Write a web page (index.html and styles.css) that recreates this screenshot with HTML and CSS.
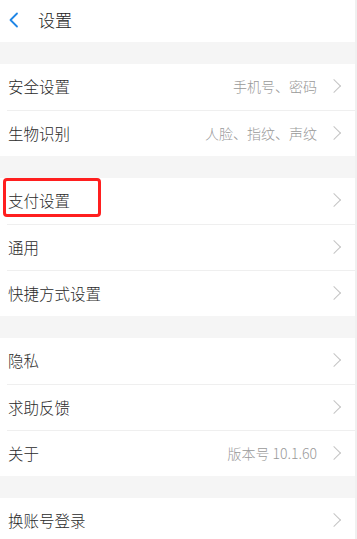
FILE: index.html
```html
<!DOCTYPE html>
<html lang="zh-CN">
<head>
  <meta charset="UTF-8">
  <title>设置</title>
  <meta name="viewport" content="width=device-width, initial-scale=1">
  <link rel="stylesheet" href="styles.css">
</head>
<body>
  <div class="page">
    <header class="topbar">
      <svg class="back" width="12" height="16" viewBox="0 0 12 16">
        <polyline points="9,1.5 2.5,8 9,14.5" fill="none" stroke="#1f86e6" stroke-width="1.8" stroke-linecap="round" stroke-linejoin="round"/>
      </svg>
      <span class="title">设置</span>
    </header>

    <div class="gap"></div>
    <div class="group">
      <div class="row"><span class="label">安全设置</span><span class="value">手机号、密码</span><i class="arrow"></i></div>
      <div class="row"><span class="label">生物识别</span><span class="value">人脸、指纹、声纹</span><i class="arrow"></i></div>
    </div>

    <div class="gap"></div>
    <div class="group">
      <div class="row marked"><span class="label">支付设置</span><i class="arrow"></i><span class="mark"></span></div>
      <div class="row"><span class="label">通用</span><i class="arrow"></i></div>
      <div class="row"><span class="label">快捷方式设置</span><i class="arrow"></i></div>
    </div>

    <div class="gap"></div>
    <div class="group">
      <div class="row"><span class="label">隐私</span><i class="arrow"></i></div>
      <div class="row"><span class="label">求助反馈</span><i class="arrow"></i></div>
      <div class="row"><span class="label">关于</span><span class="value">版本号 10.1.60</span><i class="arrow"></i></div>
    </div>

    <div class="gap"></div>
    <div class="group">
      <div class="row"><span class="label">换账号登录</span><i class="arrow"></i></div>
    </div>
  </div>
</body>
</html>
```

FILE: styles.css
```css
body {
  margin: 0;
  font-family: "Noto Sans CJK SC", "Noto Sans", sans-serif;
  background: #fff;
}
.page {
  width: 355px;
  height: 539px;
  overflow: hidden;
  border-right: 2px solid #f0f0f0;
  background: #f5f5f5;
}
.topbar {
  height: 42px;
  display: flex;
  align-items: center;
  background: #fff;
  padding-left: 8px;
  box-sizing: border-box;
}
.back {
  display: block;
  margin-top: -3px;
}
.title {
  margin-left: 18px;
  font-size: 17px;
  font-weight: 300;
  color: #222;
  margin-top: -3px;
}
.gap {
  height: 22px;
}
.group {
  background: #fff;
}
.row {
  position: relative;
  height: 46px;
  box-sizing: border-box;
  margin-left: 7px;
  padding: 0 16px 2px 1px;
  display: flex;
  align-items: center;
}
.row + .row {
  border-top: 1px solid #efefef;
}
.label {
  flex: 1;
  font-size: 15.5px;
  font-weight: 300;
  color: #2a2a2a;
}
.value {
  font-size: 14px;
  font-weight: 300;
  color: #999;
  margin-right: 12px;
}
.arrow {
  display: block;
  width: 9px;
  height: 9px;
  border-top: 1.2px solid #c4c4c4;
  border-right: 1.2px solid #c4c4c4;
  transform: rotate(45deg);
}
.mark {
  position: absolute;
  left: -4px;
  top: 0;
  width: 98px;
  height: 39px;
  box-sizing: border-box;
  border: 3px solid #ff1f1f;
  border-radius: 4px;
}
```
